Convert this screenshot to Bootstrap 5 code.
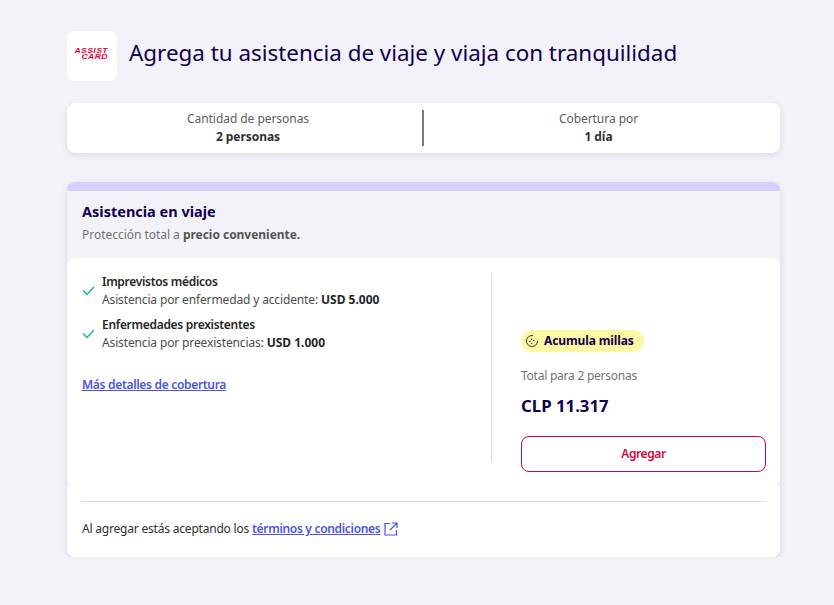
<!DOCTYPE html>
<html lang="es">
<head>
    <meta charset="UTF-8">
    <meta name="viewport" content="width=device-width, initial-scale=1.0">
    <title>Asistencia de viaje</title>
    <link href="https://cdn.jsdelivr.net/npm/bootstrap@5.3.0/dist/css/bootstrap.min.css" rel="stylesheet">
    <style>
        body {
            background: #f2f2f8;
            font-family: "Noto Sans", sans-serif;
            color: #303030;
            font-size: 12px;
        }
        .page-wrap { width: 713px; margin-left: 67px; padding-top: 31px; }
        .logo-box {
            width: 50px; height: 50px; border-radius: 8px; background: #fff;
            padding: 0 9px 4px 8px; text-align: right;
            color: #e4003a; font: italic 700 6.4px/6.5px "Liberation Sans", sans-serif;
            letter-spacing: .3px;
        }
        .logo-box span { display: block; transform: scaleX(1.35); transform-origin: right center; }
        .page-title { font-size: 22.4px; font-weight: 400; color: #10004f; margin: 0 0 6px 12px; }
        .summary-box {
            height: 50px; margin-top: 22px; background: #fff; border-radius: 8px;
            box-shadow: 0 2px 6px rgba(40,40,80,.12);
        }
        .summary-cell { height: 36px; line-height: 18px; color: #5c5c5c; letter-spacing: -.05px; }
        .summary-cell b { color: #303030; font-weight: 700; display: block; }
        .summary-first { width: 357px; padding-left: 7px; border-right: 2px solid #77777c; }
        .summary-second { padding-right: 7px; }
        .main-box {
            margin-top: 29px; border-radius: 8px; background: #f2f2f8; overflow: hidden;
            box-shadow: 0 2px 6px rgba(40,40,80,.14);
        }
        .main-band { height: 9px; background: #d5cffb; }
        .main-head { height: 67px; padding: 11px 15px 0; }
        .main-head h2 { font-size: 14.5px; font-weight: 700; color: #10004f; margin: 0 0 5px; line-height: 19px; }
        .main-head p { margin: 0; color: #737373; line-height: 18px; letter-spacing: -.03px; }
        .main-head p b { color: #555; }
        .main-body { height: 228px; background: #fff; border-radius: 8px; }
        .left-col { width: 425px; height: 189px; margin-top: 15px; padding: 0 15px; border-right: 1px solid #dcdcdc; }
        .cover-list { margin-top: -4px; }
        .cover-item { line-height: 18px; height: 43px; }
        .cover-item svg { flex: none; margin-right: 7px; }
        .cover-item div { letter-spacing: -.14px; color: #4c4c4c; }
        .cover-item b { color: #252525; font-weight: 600; letter-spacing: -.3px; display: block; }
        .cover-item strong { color: #252525; font-weight: 700; letter-spacing: 0; }
        .link-blue { color: #4a54e4; font-weight: 600; letter-spacing: -.31px; text-decoration: underline; }
        .more-link { display: inline-block; margin-top: 21px; }
        .right-col { width: 245px; margin-left: 29px; padding-top: 72px; }
        .miles-pill {
            display: inline-flex; align-items: center; height: 22px; padding: 0 10px 0 4px;
            background: #fdf8a3; border-radius: 11px; color: #10004f; font-weight: 700; letter-spacing: -.12px;
        }
        .miles-pill svg { margin-right: 5px; }
        .total-label { margin-top: 14px; color: #737373; line-height: 18px; letter-spacing: -.24px; }
        .price { margin-top: 10px; font-size: 16.8px; font-weight: 700; color: #10004f; line-height: 22px; }
        .btn-add {
            display: block; width: 100%; height: 36px; margin-top: 19px; padding: 0;
            border: 1px solid #d0043c; border-radius: 8px; background: #fff;
            color: #d0043c; font-size: 12px; font-weight: 600; letter-spacing: -.4px;
        }
        .foot-wrap { background: #fff; height: 71px; padding: 15px 14px 0; }
        .main-foot { border-top: 1px solid #dedee2; padding: 18px 0 0 1px; line-height: 18px; letter-spacing: -.2px; }
        .main-foot svg { vertical-align: -3px; margin-left: 1px; }
    </style>
</head>
<body>
    <div class="page-wrap">
        <div class="d-flex align-items-center">
            <div class="logo-box d-flex flex-column justify-content-center">
                <span>ASSIST</span>
                <span>CARD</span>
            </div>
            <h1 class="page-title">Agrega tu asistencia de viaje y viaja con tranquilidad</h1>
        </div>

        <div class="summary-box d-flex align-items-center">
            <div class="summary-cell summary-first text-center">Cantidad de personas<b>2 personas</b></div>
            <div class="summary-cell summary-second flex-grow-1 text-center">Cobertura por<b>1 día</b></div>
        </div>

        <div class="main-box">
            <div class="main-band"></div>
            <div class="main-head">
                <h2>Asistencia en viaje</h2>
                <p>Protección total a <b>precio conveniente.</b></p>
            </div>
            <div class="main-body d-flex">
                <div class="left-col">
                    <div class="cover-list">
                        <div class="cover-item d-flex align-items-center">
                            <svg width="13" height="13" viewBox="0 0 13 13" fill="none" stroke="#12b5a5" stroke-width="1.4"><path d="M1 6.5l4 4L12 3"/></svg>
                            <div><b>Imprevistos médicos</b>Asistencia por enfermedad y accidente: <strong>USD 5.000</strong></div>
                        </div>
                        <div class="cover-item d-flex align-items-center">
                            <svg width="13" height="13" viewBox="0 0 13 13" fill="none" stroke="#12b5a5" stroke-width="1.4"><path d="M1 6.5l4 4L12 3"/></svg>
                            <div><b>Enfermedades prexistentes</b>Asistencia por preexistencias: <strong>USD 1.000</strong></div>
                        </div>
                    </div>
                    <a href="#" class="link-blue more-link">Más detalles de cobertura</a>
                </div>
                <div class="right-col">
                    <div class="miles-pill">
                        <svg width="14" height="14" viewBox="0 0 14 14" fill="none" stroke="#303030" stroke-width="1"><path d="M8 1.6A5.5 5.500 0 1 0 12.5 7"/><path d="M6.5 4.500v1.6M4 7.500h1.500M8 6.500h1.500M6.500 9v1"/></svg>
                        Acumula millas
                    </div>
                    <div class="total-label">Total para 2 personas</div>
                    <div class="price">CLP 11.317</div>
                    <button type="button" class="btn-add">Agregar</button>
                </div>
            </div>
            <div class="foot-wrap">
                <div class="main-foot">
                    Al agregar estás aceptando los <a href="#" class="link-blue">términos y condiciones</a>
                    <svg width="14" height="14" viewBox="0 0 14 14" fill="none" stroke="#4a54e4" stroke-width="1.2"><path d="M6 1.500H1v11.500h11.500V8M8 1h5v5M13 1L6 8"/></svg>
                </div>
            </div>
        </div>
    </div>
    <script src="https://cdn.jsdelivr.net/npm/bootstrap@5.3.0/dist/js/bootstrap.bundle.min.js"></script>
</body>
</html>
